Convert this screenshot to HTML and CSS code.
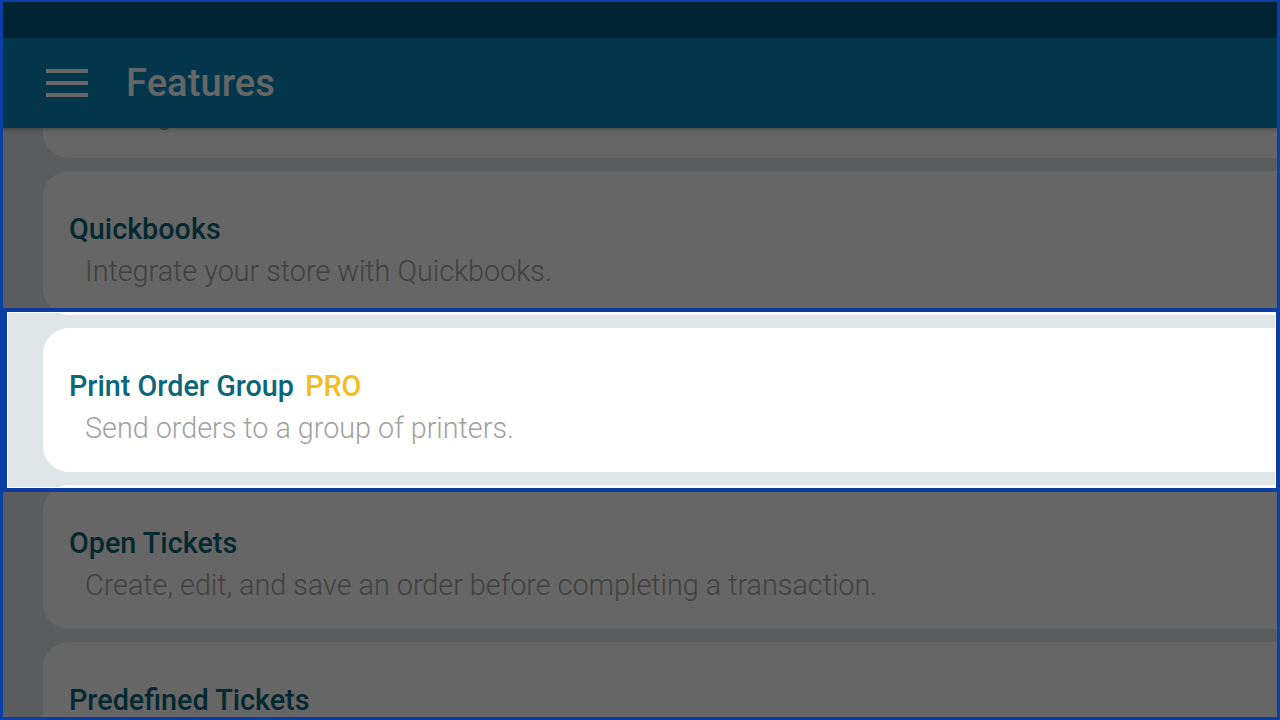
FILE: index.html
```html
<!DOCTYPE html>
<html>
<head>
<meta charset="utf-8">
<link rel="stylesheet" href="styles.css">
</head>
<body>
<div class="screen">
  <div class="statusbar"></div>
  <header class="appbar">
    <svg class="menu" width="42" height="28" viewBox="0 0 42 28"><rect x="0" y="0" width="42" height="4" fill="#fff"/><rect x="0" y="12" width="42" height="4" fill="#fff"/><rect x="0" y="24" width="42" height="4" fill="#fff"/></svg>
    <h1 class="apptitle">Features</h1>
  </header>
  <main class="list">
    <div class="card first">
      <div class="card-title">Item Notes</div>
      <div class="card-desc">Manage notes for each item.</div>
    </div>
    <div class="card">
      <div class="card-title">Quickbooks</div>
      <div class="card-desc">Integrate your store with Quickbooks.</div>
    </div>
    <div class="card">
      <div class="card-title">Print Order Group <span class="pro">PRO</span></div>
      <div class="card-desc">Send orders to a group of printers.</div>
    </div>
    <div class="card">
      <div class="card-title">Open Tickets</div>
      <div class="card-desc">Create, edit, and save an order before completing a transaction.</div>
    </div>
    <div class="card">
      <div class="card-title">Predefined Tickets</div>
      <div class="card-desc">Set up tickets in advance.</div>
    </div>
  </main>
  <div class="spotlight"></div>
  <div class="frame"></div>
</div>
</body>
</html>
```
FILE: styles.css
```css
html, body {
  margin: 0;
  padding: 0;
}
body {
  width: 1280px;
  height: 720px;
  overflow: hidden;
  font-family: Roboto, "Noto Sans", sans-serif;
  background: #e0e5e8;
}
.screen {
  position: relative;
  width: 1280px;
  height: 720px;
  overflow: hidden;
  display: flex;
  flex-direction: column;
  box-sizing: border-box;
  padding: 2px 3px 0 3px;
  background: #e0e5e8;
}
.statusbar {
  height: 36px;
  flex: none;
  background: #005a7f;
  position: relative;
  z-index: 2;
}
.appbar {
  height: 90px;
  flex: none;
  background: #0887b9;
  display: flex;
  align-items: center;
  padding-left: 43px;
  gap: 38px;
  position: relative;
  z-index: 2;
  box-shadow: 0 2px 4px rgba(0,0,0,0.25);
}
.menu {
  display: block;
  flex: none;
}
.apptitle {
  margin: 0;
  color: #fff;
  font-weight: 500;
  font-size: 38px;
  letter-spacing: 0.1px;
}
.list {
  flex: 1;
  display: flex;
  flex-direction: column;
  gap: 13px;
  padding-left: 40px;
  margin-right: -60px;
}
.card {
  flex: none;
  height: 144px;
  box-sizing: border-box;
  background: #fff;
  border-radius: 26px;
  padding: 41px 0 0 26px;
  display: flex;
  flex-direction: column;
  gap: 8px;
}
.card.first {
  margin-top: -114px;
}
.card-title {
  font-size: 28.75px;
  line-height: 34px;
  font-weight: 500;
  color: #0b6679;
  white-space: nowrap;
}
.pro {
  color: #f4bc1c;
  margin-left: 4px;
}
.card-desc {
  font-size: 28.75px;
  line-height: 34px;
  font-weight: 300;
  color: #a2a2a2;
  padding-left: 16px;
  white-space: nowrap;
}
.spotlight {
  position: absolute;
  left: 3px;
  top: 308px;
  width: 1277px;
  height: 184px;
  box-sizing: border-box;
  border: 4px solid #0b3c9f;
  box-shadow: 0 0 0 3000px rgba(0,0,0,0.6), inset 0 0 0 1px rgba(255,255,255,0.8);
  z-index: 5;
}
.frame {
  position: absolute;
  inset: 0;
  border-style: solid;
  border-color: #0b3fa8;
  border-width: 2px 3px 3px 3px;
  z-index: 6;
  pointer-events: none;
}
```
